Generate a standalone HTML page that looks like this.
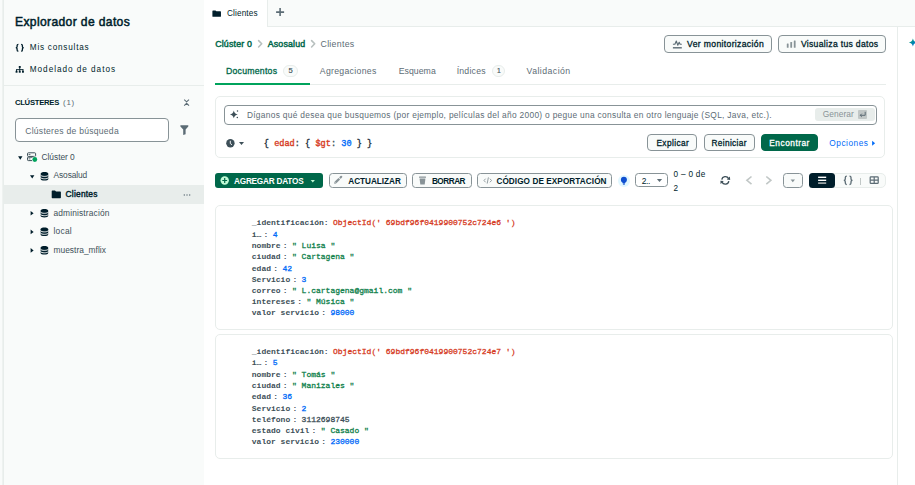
<!DOCTYPE html>
<html><head><meta charset="utf-8">
<style>
html,body{margin:0;padding:0;width:915px;height:485px;overflow:hidden;background:#fff;position:relative;font-family:"Liberation Sans",sans-serif;}
.b{position:absolute;box-sizing:border-box;}
.t{position:absolute;white-space:nowrap;line-height:1;font-family:"Liberation Sans",sans-serif;}
.m{position:absolute;white-space:pre;line-height:1;font-family:"Liberation Mono",monospace;font-size:8px;letter-spacing:0px;}
.m b{font-weight:700;}
.q b{font-weight:400;-webkit-text-stroke:0.35px currentColor;}
.m .sep{color:#3d4f58;font-weight:700;margin-left:2.2px;}
.m .v{margin-left:4.4px;}
svg{position:absolute;overflow:visible;}
</style></head><body>
<!-- sidebar -->
<div class="b" style="left:0;top:0;width:204px;height:485px;background:#f9fbfa"></div>
<div class="b" style="left:0;top:0;width:2px;height:485px;background:#f9fbfa"></div>
<div class="b" style="left:2px;top:0;width:1px;height:485px;background:#eef2f0"></div>
<div class="b" style="left:3px;top:0;width:1px;height:485px;background:#e8edeb"></div>
<div class="b" style="left:4px;top:85px;width:200px;height:1px;background:#e8edeb"></div>
<div class="b" style="left:15px;top:118px;width:154px;height:24px;border:1px solid #889397;border-radius:4px;background:#fff"></div>
<div class="b" style="left:4px;top:185px;width:200px;height:19px;background:#e8edeb"></div>
<!-- tab bar -->
<div class="b" style="left:204px;top:0;width:711px;height:27px;background:#f9fbfa;border-bottom:1px solid #e8edeb"></div>
<div class="b" style="left:204px;top:0;width:64px;height:27px;background:#fff;border-right:1px solid #e8edeb"></div>
<div class="b" style="left:897px;top:27px;width:1px;height:458px;background:#e8edeb"></div>
<!-- header buttons -->
<div class="b" style="left:664px;top:35px;width:107.7px;height:17.7px;border:1px solid #889397;border-radius:4px;background:#f9fbfa"></div>
<div class="b" style="left:778.2px;top:35px;width:107.5px;height:17.7px;border:1px solid #889397;border-radius:4px;background:#f9fbfa"></div>
<!-- tabs line -->
<div class="b" style="left:215px;top:84px;width:671px;height:1px;background:#e8edeb"></div>
<div class="b" style="left:215px;top:83px;width:94.5px;height:2px;background:#00a35c"></div>
<div class="b" style="left:283px;top:65px;width:15px;height:12px;border:1px solid #e8edeb;border-radius:6px;background:#f9fbfa"></div>
<div class="b" style="left:492.3px;top:65px;width:12.5px;height:12px;border:1px solid #e8edeb;border-radius:6px;background:#f9fbfa"></div>
<!-- query container -->
<div class="b" style="left:215px;top:96px;width:670px;height:62px;border:1px solid #e8edeb;border-radius:5px;background:#fff"></div>
<div class="b" style="left:224px;top:105px;width:653px;height:20px;border:1px solid #889397;border-radius:4px;background:#fff"></div>
<div class="b" style="left:815px;top:108px;width:60px;height:13px;border-radius:3px;background:#e8edeb"></div>
<div class="b" style="left:858px;top:110px;width:9px;height:9px;border-radius:1px;background:#c1c7c6"></div>
<div class="b" style="left:647.1px;top:134.3px;width:49.5px;height:17.2px;border:1px solid #889397;border-radius:4px;background:#f9fbfa"></div>
<div class="b" style="left:703.5px;top:134.3px;width:51.2px;height:17.2px;border:1px solid #889397;border-radius:4px;background:#f9fbfa"></div>
<div class="b" style="left:761.2px;top:134.3px;width:56.8px;height:17.2px;border:1px solid #00684a;border-radius:4px;background:#00684a"></div>
<!-- toolbar -->
<div class="b" style="left:215px;top:173px;width:108px;height:14.8px;border-radius:3px;background:#00684a"></div>
<div class="b" style="left:328.9px;top:173px;width:77.8px;height:14.6px;border:1px solid #889397;border-radius:3.5px;background:#f9fbfa"></div>
<div class="b" style="left:412.1px;top:173px;width:59.6px;height:14.6px;border:1px solid #889397;border-radius:3.5px;background:#f9fbfa"></div>
<div class="b" style="left:477.1px;top:173px;width:134.6px;height:14.6px;border:1px solid #889397;border-radius:3.5px;background:#f9fbfa"></div>
<div class="b" style="left:618px;top:174.8px;width:12px;height:12px;border-radius:6px;background:#e1f7ff"></div>
<div class="b" style="left:635.4px;top:172.9px;width:32.3px;height:14.4px;border:1px solid #889397;border-radius:3.5px;background:#fff"></div>
<div class="b" style="left:783.2px;top:172.8px;width:19.6px;height:15px;border:1px solid #889397;border-radius:3.5px;background:#f9fbfa"></div>
<div class="b" style="left:809px;top:173.1px;width:76.7px;height:14.9px;border:1px solid #e8edeb;border-radius:5px;background:#f9fbfa"></div>
<div class="b" style="left:809.2px;top:173px;width:25.8px;height:14.6px;border-radius:3.5px;background:#001e2b"></div>
<div class="b" style="left:860.2px;top:177.5px;width:0.8px;height:7px;background:#c1c7c6"></div>
<!-- cards -->
<div class="b" style="left:215px;top:205px;width:678px;height:125px;border:1px solid #e8edeb;border-radius:5px;background:#fff"></div>
<div class="b" style="left:215px;top:334px;width:678px;height:125px;border:1px solid #e8edeb;border-radius:5px;background:#fff"></div>
<svg width="915" height="485" style="left:0;top:0" viewBox="0 0 915 485">
<defs>
<linearGradient id="sg" x1="0" y1="0" x2="1" y2="1"><stop offset="0" stop-color="#00a35c"/><stop offset="1" stop-color="#016bf8"/></linearGradient>
<g id="db">
  <path d="M0,1.7 C0,0.5 1.7,0 3.8,0 C5.9,0 7.6,0.5 7.6,1.7 V6.8 C7.6,8 5.9,8.5 3.8,8.5 C1.7,8.5 0,8 0,6.8 Z" fill="#001e2b"/>
  <path d="M-0.2,3 C0.6,4 2.2,4.3 3.8,4.3 C5.4,4.3 7,4 7.8,3" fill="none" stroke="#f9fbfa" stroke-width="1"/>
  <path d="M-0.2,5.4 C0.6,6.4 2.2,6.7 3.8,6.7 C5.4,6.7 7,6.4 7.8,5.4" fill="none" stroke="#f9fbfa" stroke-width="1"/>
</g>
<path id="folder" d="M0,0.7 Q0,0 0.7,0 H3.3 L4.3,1 H8.5 Q9.2,1 9.2,1.7 V7 Q9.2,7.7 8.5,7.7 H0.7 Q0,7.7 0,7 Z" fill="#001e2b"/>
</defs>
<!-- sidebar {} -->
<g fill="none" stroke="#001e2b" stroke-width="1.3">
<path d="M18.4,44.3 Q17.1,44.3 17.1,45.5 V46.7 Q17.1,47.7 15.8,47.7 Q17.1,47.7 17.1,48.7 V49.9 Q17.1,51.1 18.4,51.1"/>
<path d="M21.1,44.3 Q22.4,44.3 22.4,45.5 V46.7 Q22.4,47.7 23.7,47.7 Q22.4,47.7 22.4,48.7 V49.9 Q22.4,51.1 21.1,51.1"/>
</g>
<!-- sitemap -->
<g fill="#001e2b">
<rect x="18.8" y="66" width="1.9" height="1.9"/>
<rect x="19.3" y="67.5" width="0.9" height="2.2"/>
<rect x="16.1" y="69.2" width="7.3" height="0.9"/>
<rect x="16.1" y="69.5" width="0.9" height="1.5"/>
<rect x="19.3" y="69.5" width="0.9" height="1.5"/>
<rect x="22.5" y="69.5" width="0.9" height="1.5"/>
<rect x="15.6" y="70.8" width="1.9" height="1.9"/>
<rect x="18.8" y="70.8" width="1.9" height="1.9"/>
<rect x="22" y="70.8" width="1.9" height="1.9"/>
</g>
<!-- collapse chevrons -->
<g fill="none" stroke="#5c6c75" stroke-width="1.1">
<path d="M184.2,99.6 L186.6,101.8 L189,99.6"/>
<path d="M184.2,105.6 L186.6,103.3 L189,105.6"/>
</g>
<!-- funnel -->
<path d="M180.4,125.3 H188.3 V126.6 L185.6,129.6 V134.2 L183.2,135.1 V129.6 L180.4,126.6 Z" fill="#5c6c75"/>
<!-- carets -->
<g fill="#001e2b">
<path d="M18.1,156.3 H22.5 L20.3,159.7 Z"/>
<path d="M30,175.3 H34.4 L32.2,178.4 Z"/>
<path d="M30.6,211 L33.6,213.3 L30.6,215.6 Z"/>
<path d="M30.6,229.6 L33.6,231.9 L30.6,234.2 Z"/>
<path d="M30.6,248.1 L33.6,250.4 L30.6,252.7 Z"/>
</g>
<!-- server icon -->
<g fill="none" stroke="#3d4f58" stroke-width="1">
<rect x="27.5" y="152.8" width="8.1" height="3.6" rx="0.8"/>
<rect x="27.5" y="157.2" width="8.1" height="3.4" rx="0.8"/>
</g>
<rect x="28.6" y="154.2" width="1.8" height="0.8" fill="#3d4f58"/>
<rect x="28.6" y="158.5" width="1.8" height="0.8" fill="#3d4f58"/>
<circle cx="34.8" cy="159.5" r="2.9" fill="#f9fbfa"/>
<circle cx="34.8" cy="159.5" r="2.4" fill="#00a35c"/>
<!-- db icons -->
<use href="#db" x="40.7" y="172.1"/>
<use href="#db" x="40.6" y="209"/>
<use href="#db" x="40.6" y="227.6"/>
<use href="#db" x="40.6" y="246.1"/>
<!-- folders -->
<use href="#folder" x="51.7" y="190.5"/>
<g transform="translate(212.4,10.4) scale(0.93,0.82)"><use href="#folder"/></g>
<!-- ellipsis -->
<g fill="#5c6c75"><circle cx="184.3" cy="195" r="0.7"/><circle cx="187" cy="195" r="0.7"/><circle cx="189.7" cy="195" r="0.7"/></g>
<!-- tab plus -->
<g stroke="#5c6c75" stroke-width="1.6"><path d="M280.1,8.1 V16.1 M276.1,12.1 H284.1"/></g>
<!-- activity icon -->
<path d="M672.9,44.2 H674.9 L676.3,41 L677.8,45.2 L679.2,42.2 L680.1,44.2 H681.8" fill="none" stroke="#5c6c75" stroke-width="1.1" stroke-linejoin="round"/>
<rect x="672.9" y="47.1" width="8.9" height="1.4" fill="#5c6c75"/>
<!-- bars icon -->
<g fill="#889397"><rect x="786.8" y="43.5" width="1.8" height="4.3" rx="0.5"/><rect x="790.3" y="41.9" width="1.8" height="5.9" rx="0.5"/><rect x="793.8" y="40.4" width="1.8" height="7.4" rx="0.5"/></g>
<!-- right sparkle -->
<path d="M912.9,38.6 Q913.5,41.9 917,42.5 Q913.5,43.1 912.9,46.4 Q912.3,43.1 908.8,42.5 Q912.3,41.9 912.9,38.6 Z" fill="url(#sg)"/>
<!-- AI sparkle -->
<path d="M233.8,110.5 Q234.4,113.9 237.8,114.4 Q234.4,114.9 233.8,118.3 Q233.2,114.9 229.9,114.4 Q233.2,113.9 233.8,110.5 Z" fill="#3d4f58"/>
<circle cx="237.5" cy="110.9" r="0.75" fill="#3d4f58"/><circle cx="237.3" cy="117.5" r="0.75" fill="#3d4f58"/>
<!-- enter key -->
<path d="M865.2,111.8 V115.3 H860.2 M861.8,113.7 L860.2,115.3 L861.8,116.9" fill="none" stroke="#5c6c75" stroke-width="1"/>
<!-- clock -->
<circle cx="230.4" cy="143.2" r="4.2" fill="#3d4f58"/>
<path d="M230.3,140.8 V143.5 L232,144.8" fill="none" stroke="#fff" stroke-width="0.9"/>
<path d="M239,142.1 H244 L241.5,145.1 Z" fill="#3d4f58"/>
<!-- opciones triangle -->
<path d="M872.1,140.8 L875.1,143.25 L872.1,145.7 Z" fill="#016bf8"/>
<!-- agregar plus circle -->
<circle cx="224.7" cy="180.5" r="4.2" fill="#c0fad6"/>
<path d="M224.7,178.1 V182.9 M222.3,180.5 H227.1" stroke="#00684a" stroke-width="1.2"/>
<path d="M310.7,180 H314.9 L312.8,182.4 Z" fill="#c0fad6"/>
<!-- pencil -->
<path d="M335.6,182.4 L339.3,178.7" stroke="#889397" stroke-width="2.3"/>
<path d="M334.2,183.8 L334.6,181.6 L336.4,183.4 Z" fill="#889397"/>
<path d="M340.5,177.5 L341.2,176.8" stroke="#889397" stroke-width="2.2" stroke-linecap="round"/>
<!-- trash -->
<rect x="419" y="176.6" width="7" height="1.2" rx="0.3" fill="#889397"/>
<path d="M419.6,178.5 H425.4 L424.7,184.4 H420.3 Z" fill="#889397"/>
<!-- code icon -->
<g fill="none" stroke="#889397" stroke-width="0.9">
<path d="M485.6,178.7 L484,180.5 L485.6,182.3"/><path d="M488.4,177.4 L487.2,183.6"/><path d="M489.9,178.7 L491.5,180.5 L489.9,182.3"/>
</g>
<!-- bulb -->
<circle cx="623.9" cy="179.7" r="3" fill="#0f4fd0"/>
<path d="M622.3,181.3 H625.5 L625,183.4 H622.8 Z" fill="#0f4fd0"/>
<rect x="622.9" y="183.7" width="2" height="0.9" fill="#0f4fd0"/>
<!-- select caret -->
<path d="M656.9,179.1 H662.1 L659.5,182.1 Z" fill="#5c6c75"/>
<!-- refresh -->
<g fill="none" stroke="#3d4f58" stroke-width="1.3">
<path d="M721.8,179.6 A3.6,3.6 0 0 1 728.6,178.6"/>
<path d="M728.8,181.1 A3.6,3.6 0 0 1 722,182.1"/>
</g>
<path d="M729.9,176.6 L730.2,180 L726.8,179.6 Z" fill="#3d4f58"/>
<path d="M720.6,184.1 L720.4,180.7 L723.8,181.1 Z" fill="#3d4f58"/>
<!-- chevrons -->
<g fill="none" stroke="#c1c7c6" stroke-width="1.6">
<path d="M751.5,176.5 L746.9,180.35 L751.5,184.2"/>
<path d="M766.3,176.5 L770.9,180.35 L766.3,184.2"/>
</g>
<path d="M790.6,179.6 H795 L792.8,182.3 Z" fill="#889397"/>
<!-- hamburger -->
<g fill="#fff"><rect x="818.1" y="176.6" width="8.1" height="1.4"/><rect x="818.1" y="179.6" width="8.1" height="1.4"/></g>
<rect x="818.1" y="182.4" width="8.1" height="1.4" fill="#c1c7c6"/>
<!-- seg {} -->
<g fill="none" stroke="#5c6c75" stroke-width="1.3">
<path d="M846.8,176.1 Q845.3,176.1 845.3,177.6 V178.9 Q845.3,180.3 843.8,180.3 Q845.3,180.3 845.3,181.7 V183 Q845.3,184.5 846.8,184.5"/>
<path d="M849.5,176.1 Q851,176.1 851,177.6 V178.9 Q851,180.3 852.5,180.3 Q851,180.3 851,181.7 V183 Q851,184.5 849.5,184.5"/>
</g>
<!-- grid -->
<g fill="none" stroke="#5c6c75" stroke-width="1.2">
<rect x="870.2" y="176.9" width="8" height="6.5" rx="0.7"/>
<path d="M874.2,176.9 V183.3 M870.2,180.1 H878.2"/>
</g>
</svg>
<svg width="915" height="485" style="left:0;top:0" viewBox="0 0 915 485">
<g fill="none" stroke="#b8c0bf" stroke-width="1.6" stroke-linecap="round" stroke-linejoin="round">
<path d="M258.6,40.6 L261.7,43.8 L258.6,47"/>
<path d="M311.6,40.6 L314.7,43.8 L311.6,47"/>
</g>
</svg>

<div class="t" style="left:15.00px;top:16.32px;font-size:12.1px;font-weight:400;color:#001e2b;-webkit-text-stroke:0.3px #001e2b;letter-spacing:0.361px;-webkit-text-stroke:0.5px #001e2b;">Explorador de datos</div>
<div class="t" style="left:29.80px;top:43.83px;font-size:8.2px;font-weight:400;color:#001e2b;letter-spacing:0.766px;">Mis consultas</div>
<div class="t" style="left:29.80px;top:65.53px;font-size:8.2px;font-weight:400;color:#001e2b;letter-spacing:0.972px;">Modelado de datos</div>
<div class="t" style="left:14.90px;top:98.75px;font-size:7.7px;font-weight:700;color:#001e2b;letter-spacing:-0.266px;">CLÚSTERES</div>
<div class="t" style="left:63.00px;top:99.19px;font-size:7.9px;font-weight:400;color:#5c6c75;letter-spacing:0.792px;">(1)</div>
<div class="t" style="left:25.20px;top:127.09px;font-size:8.6px;font-weight:400;color:#5c6c75;letter-spacing:0.255px;">Clústeres de búsqueda</div>
<div class="t" style="left:41.50px;top:152.96px;font-size:8.4px;font-weight:400;color:#3d4f58;letter-spacing:-0.032px;">Clúster 0</div>
<div class="t" style="left:53.50px;top:171.06px;font-size:8.4px;font-weight:400;color:#3d4f58;letter-spacing:-0.099px;">Asosalud</div>
<div class="t" style="left:65.60px;top:190.46px;font-size:8.4px;font-weight:400;color:#001e2b;-webkit-text-stroke:0.3px #001e2b;letter-spacing:0.219px;-webkit-text-stroke:0.4px #001e2b;">Clientes</div>
<div class="t" style="left:53.50px;top:209.16px;font-size:8.4px;font-weight:400;color:#3d4f58;letter-spacing:0.143px;">administración</div>
<div class="t" style="left:53.50px;top:227.26px;font-size:8.4px;font-weight:400;color:#3d4f58;letter-spacing:0.234px;">local</div>
<div class="t" style="left:53.50px;top:245.86px;font-size:8.4px;font-weight:400;color:#3d4f58;letter-spacing:0.022px;">muestra_mflix</div>
<div class="t" style="left:226.90px;top:9.93px;font-size:8.2px;font-weight:400;color:#001e2b;letter-spacing:0.159px;">Clientes</div>
<div class="t" style="left:215.20px;top:39.82px;font-size:8.8px;font-weight:400;color:#00684a;-webkit-text-stroke:0.3px #00684a;letter-spacing:0.186px;-webkit-text-stroke:0.45px #00684a;">Clúster 0</div>
<div class="t" style="left:267.70px;top:39.82px;font-size:8.8px;font-weight:400;color:#00684a;-webkit-text-stroke:0.3px #00684a;letter-spacing:0.186px;-webkit-text-stroke:0.45px #00684a;">Asosalud</div>
<div class="t" style="left:320.50px;top:39.82px;font-size:8.8px;font-weight:400;color:#5c6c75;letter-spacing:0.274px;">Clientes</div>
<div class="t" style="left:225.90px;top:66.81px;font-size:8.7px;font-weight:400;color:#00684a;-webkit-text-stroke:0.3px #00684a;letter-spacing:0.264px;">Documentos</div>
<div class="t" style="left:288.60px;top:67.34px;font-size:7.6px;font-weight:400;color:#3d4f58;-webkit-text-stroke:0.3px #3d4f58;letter-spacing:0.000px;-webkit-text-stroke:0.15px #3d4f58;">5</div>
<div class="t" style="left:319.80px;top:66.61px;font-size:8.7px;font-weight:400;color:#5c6c75;letter-spacing:0.302px;">Agregaciones</div>
<div class="t" style="left:398.70px;top:66.61px;font-size:8.7px;font-weight:400;color:#5c6c75;letter-spacing:0.055px;">Esquema</div>
<div class="t" style="left:456.70px;top:66.61px;font-size:8.7px;font-weight:400;color:#5c6c75;letter-spacing:0.220px;">Índices</div>
<div class="t" style="left:496.80px;top:67.34px;font-size:7.6px;font-weight:400;color:#3d4f58;-webkit-text-stroke:0.3px #3d4f58;letter-spacing:0.000px;-webkit-text-stroke:0.1px #3d4f58;">1</div>
<div class="t" style="left:526.60px;top:66.61px;font-size:8.7px;font-weight:400;color:#5c6c75;letter-spacing:0.455px;">Validación</div>
<div class="t" style="left:687.10px;top:39.89px;font-size:8.6px;font-weight:400;color:#001e2b;-webkit-text-stroke:0.3px #001e2b;letter-spacing:0.346px;">Ver monitorización</div>
<div class="t" style="left:800.90px;top:39.89px;font-size:8.6px;font-weight:400;color:#001e2b;-webkit-text-stroke:0.3px #001e2b;letter-spacing:0.317px;">Visualiza tus datos</div>
<div class="t" style="left:246.90px;top:110.76px;font-size:8.4px;font-weight:400;color:#5c6c75;letter-spacing:0.302px;">Díganos qué desea que busquemos (por ejemplo, películas del año 2000) o pegue una consulta en otro lenguaje (SQL, Java, etc.).</div>
<div class="t" style="left:822.80px;top:110.06px;font-size:8.4px;font-weight:400;color:#889397;letter-spacing:0.028px;">Generar</div>
<div class="t" style="left:656.40px;top:138.84px;font-size:8.3px;font-weight:400;color:#001e2b;-webkit-text-stroke:0.3px #001e2b;letter-spacing:0.408px;">Explicar</div>
<div class="t" style="left:711.40px;top:138.84px;font-size:8.3px;font-weight:400;color:#001e2b;-webkit-text-stroke:0.3px #001e2b;letter-spacing:0.361px;">Reiniciar</div>
<div class="t" style="left:769.30px;top:138.84px;font-size:8.3px;font-weight:400;color:#ffffff;-webkit-text-stroke:0.3px #ffffff;letter-spacing:0.512px;">Encontrar</div>
<div class="t" style="left:829.30px;top:138.64px;font-size:8.3px;font-weight:400;color:#016bf8;letter-spacing:0.514px;">Opciones</div>
<div class="t" style="left:234.00px;top:177.53px;font-size:8.2px;font-weight:700;color:#ffffff;letter-spacing:-0.197px;">AGREGAR DATOS</div>
<div class="t" style="left:348.30px;top:177.73px;font-size:8.2px;font-weight:700;color:#001e2b;letter-spacing:-0.016px;">ACTUALIZAR</div>
<div class="t" style="left:431.90px;top:177.73px;font-size:8.2px;font-weight:700;color:#001e2b;letter-spacing:-0.464px;">BORRAR</div>
<div class="t" style="left:496.40px;top:177.73px;font-size:8.2px;font-weight:700;color:#001e2b;letter-spacing:0.077px;">CÓDIGO DE EXPORTACIÓN</div>
<div class="t" style="left:641.80px;top:176.56px;font-size:8.4px;font-weight:400;color:#001e2b;letter-spacing:-0.342px;">2..</div>
<div class="t" style="left:673.50px;top:170.83px;font-size:8.2px;font-weight:400;color:#001e2b;letter-spacing:0.309px;">0 – 0 de</div>
<div class="t" style="left:673.50px;top:185.03px;font-size:8.2px;font-weight:400;color:#001e2b;letter-spacing:0.000px;">2</div>
<div class="m q" style="left:263.8px;top:140.1px;font-size:8.6px;letter-spacing:0px"><b style="color:#1c2d38">{ </b><b style="color:#d63b1f">edad</b><b style="color:#3d4f58">: </b><b style="color:#1c2d38">{ </b><b style="color:#d63b1f">$gt</b><b style="color:#3d4f58">: </b><b style="color:#016bf8">30</b><b style="color:#1c2d38"> } }</b></div>
<div class="m" style="left:251.8px;top:218.82px"><b style="color:#3d4f58">_identificación:</b><span class="v" style="color:#d63b1f;font-weight:400;-webkit-text-stroke:0.3px #d63b1f">ObjectId(' 69bdf96f0419900752c724e6 ')</span></div>
<div class="m" style="left:251.8px;top:230.72px"><b style="color:#3d4f58">i…</b><span class="sep">:</span><span class="v" style="color:#016bf8;font-weight:400;-webkit-text-stroke:0.3px #016bf8">4</span></div>
<div class="m" style="left:251.8px;top:241.82px"><b style="color:#3d4f58">nombre</b><span class="sep">:</span><span class="v" style="color:#12824d;font-weight:400;-webkit-text-stroke:0.3px #12824d">" Luisa "</span></div>
<div class="m" style="left:251.8px;top:252.72px"><b style="color:#3d4f58">ciudad</b><span class="sep">:</span><span class="v" style="color:#12824d;font-weight:400;-webkit-text-stroke:0.3px #12824d">" Cartagena "</span></div>
<div class="m" style="left:251.8px;top:264.82px"><b style="color:#3d4f58">edad</b><span class="sep">:</span><span class="v" style="color:#016bf8;font-weight:400;-webkit-text-stroke:0.3px #016bf8">42</span></div>
<div class="m" style="left:251.8px;top:275.72px"><b style="color:#3d4f58">Servicio</b><span class="sep">:</span><span class="v" style="color:#016bf8;font-weight:400;-webkit-text-stroke:0.3px #016bf8">3</span></div>
<div class="m" style="left:251.8px;top:286.52px"><b style="color:#3d4f58">correo</b><span class="sep">:</span><span class="v" style="color:#12824d;font-weight:400;-webkit-text-stroke:0.3px #12824d">" L.cartagena@gmail.com "</span></div>
<div class="m" style="left:251.8px;top:298.42px"><b style="color:#3d4f58">intereses</b><span class="sep">:</span><span class="v" style="color:#12824d;font-weight:400;-webkit-text-stroke:0.3px #12824d">" Música "</span></div>
<div class="m" style="left:251.8px;top:308.92px"><b style="color:#3d4f58">valor servicio</b><span class="sep">:</span><span class="v" style="color:#016bf8;font-weight:400;-webkit-text-stroke:0.3px #016bf8">98000</span></div>
<div class="m" style="left:251.8px;top:347.82px"><b style="color:#3d4f58">_identificación:</b><span class="v" style="color:#d63b1f;font-weight:400;-webkit-text-stroke:0.3px #d63b1f">ObjectId(' 69bdf96f0419900752c724e7 ')</span></div>
<div class="m" style="left:251.8px;top:358.72px"><b style="color:#3d4f58">i…</b><span class="sep">:</span><span class="v" style="color:#016bf8;font-weight:400;-webkit-text-stroke:0.3px #016bf8">5</span></div>
<div class="m" style="left:251.8px;top:370.82px"><b style="color:#3d4f58">nombre</b><span class="sep">:</span><span class="v" style="color:#12824d;font-weight:400;-webkit-text-stroke:0.3px #12824d">" Tomás "</span></div>
<div class="m" style="left:251.8px;top:381.72px"><b style="color:#3d4f58">ciudad</b><span class="sep">:</span><span class="v" style="color:#12824d;font-weight:400;-webkit-text-stroke:0.3px #12824d">" Manizales "</span></div>
<div class="m" style="left:251.8px;top:393.22px"><b style="color:#3d4f58">edad</b><span class="sep">:</span><span class="v" style="color:#016bf8;font-weight:400;-webkit-text-stroke:0.3px #016bf8">36</span></div>
<div class="m" style="left:251.8px;top:404.82px"><b style="color:#3d4f58">Servicio</b><span class="sep">:</span><span class="v" style="color:#016bf8;font-weight:400;-webkit-text-stroke:0.3px #016bf8">2</span></div>
<div class="m" style="left:251.8px;top:415.72px"><b style="color:#3d4f58">teléfono</b><span class="sep">:</span><span class="v" style="color:#3d4f58;font-weight:400;-webkit-text-stroke:0.3px #3d4f58">3112698745</span></div>
<div class="m" style="left:251.8px;top:427.12px"><b style="color:#3d4f58">estado civil</b><span class="sep">:</span><span class="v" style="color:#12824d;font-weight:400;-webkit-text-stroke:0.3px #12824d">" Casado "</span></div>
<div class="m" style="left:251.8px;top:438.42px"><b style="color:#3d4f58">valor servicio</b><span class="sep">:</span><span class="v" style="color:#016bf8;font-weight:400;-webkit-text-stroke:0.3px #016bf8">230000</span></div>
</body></html>
